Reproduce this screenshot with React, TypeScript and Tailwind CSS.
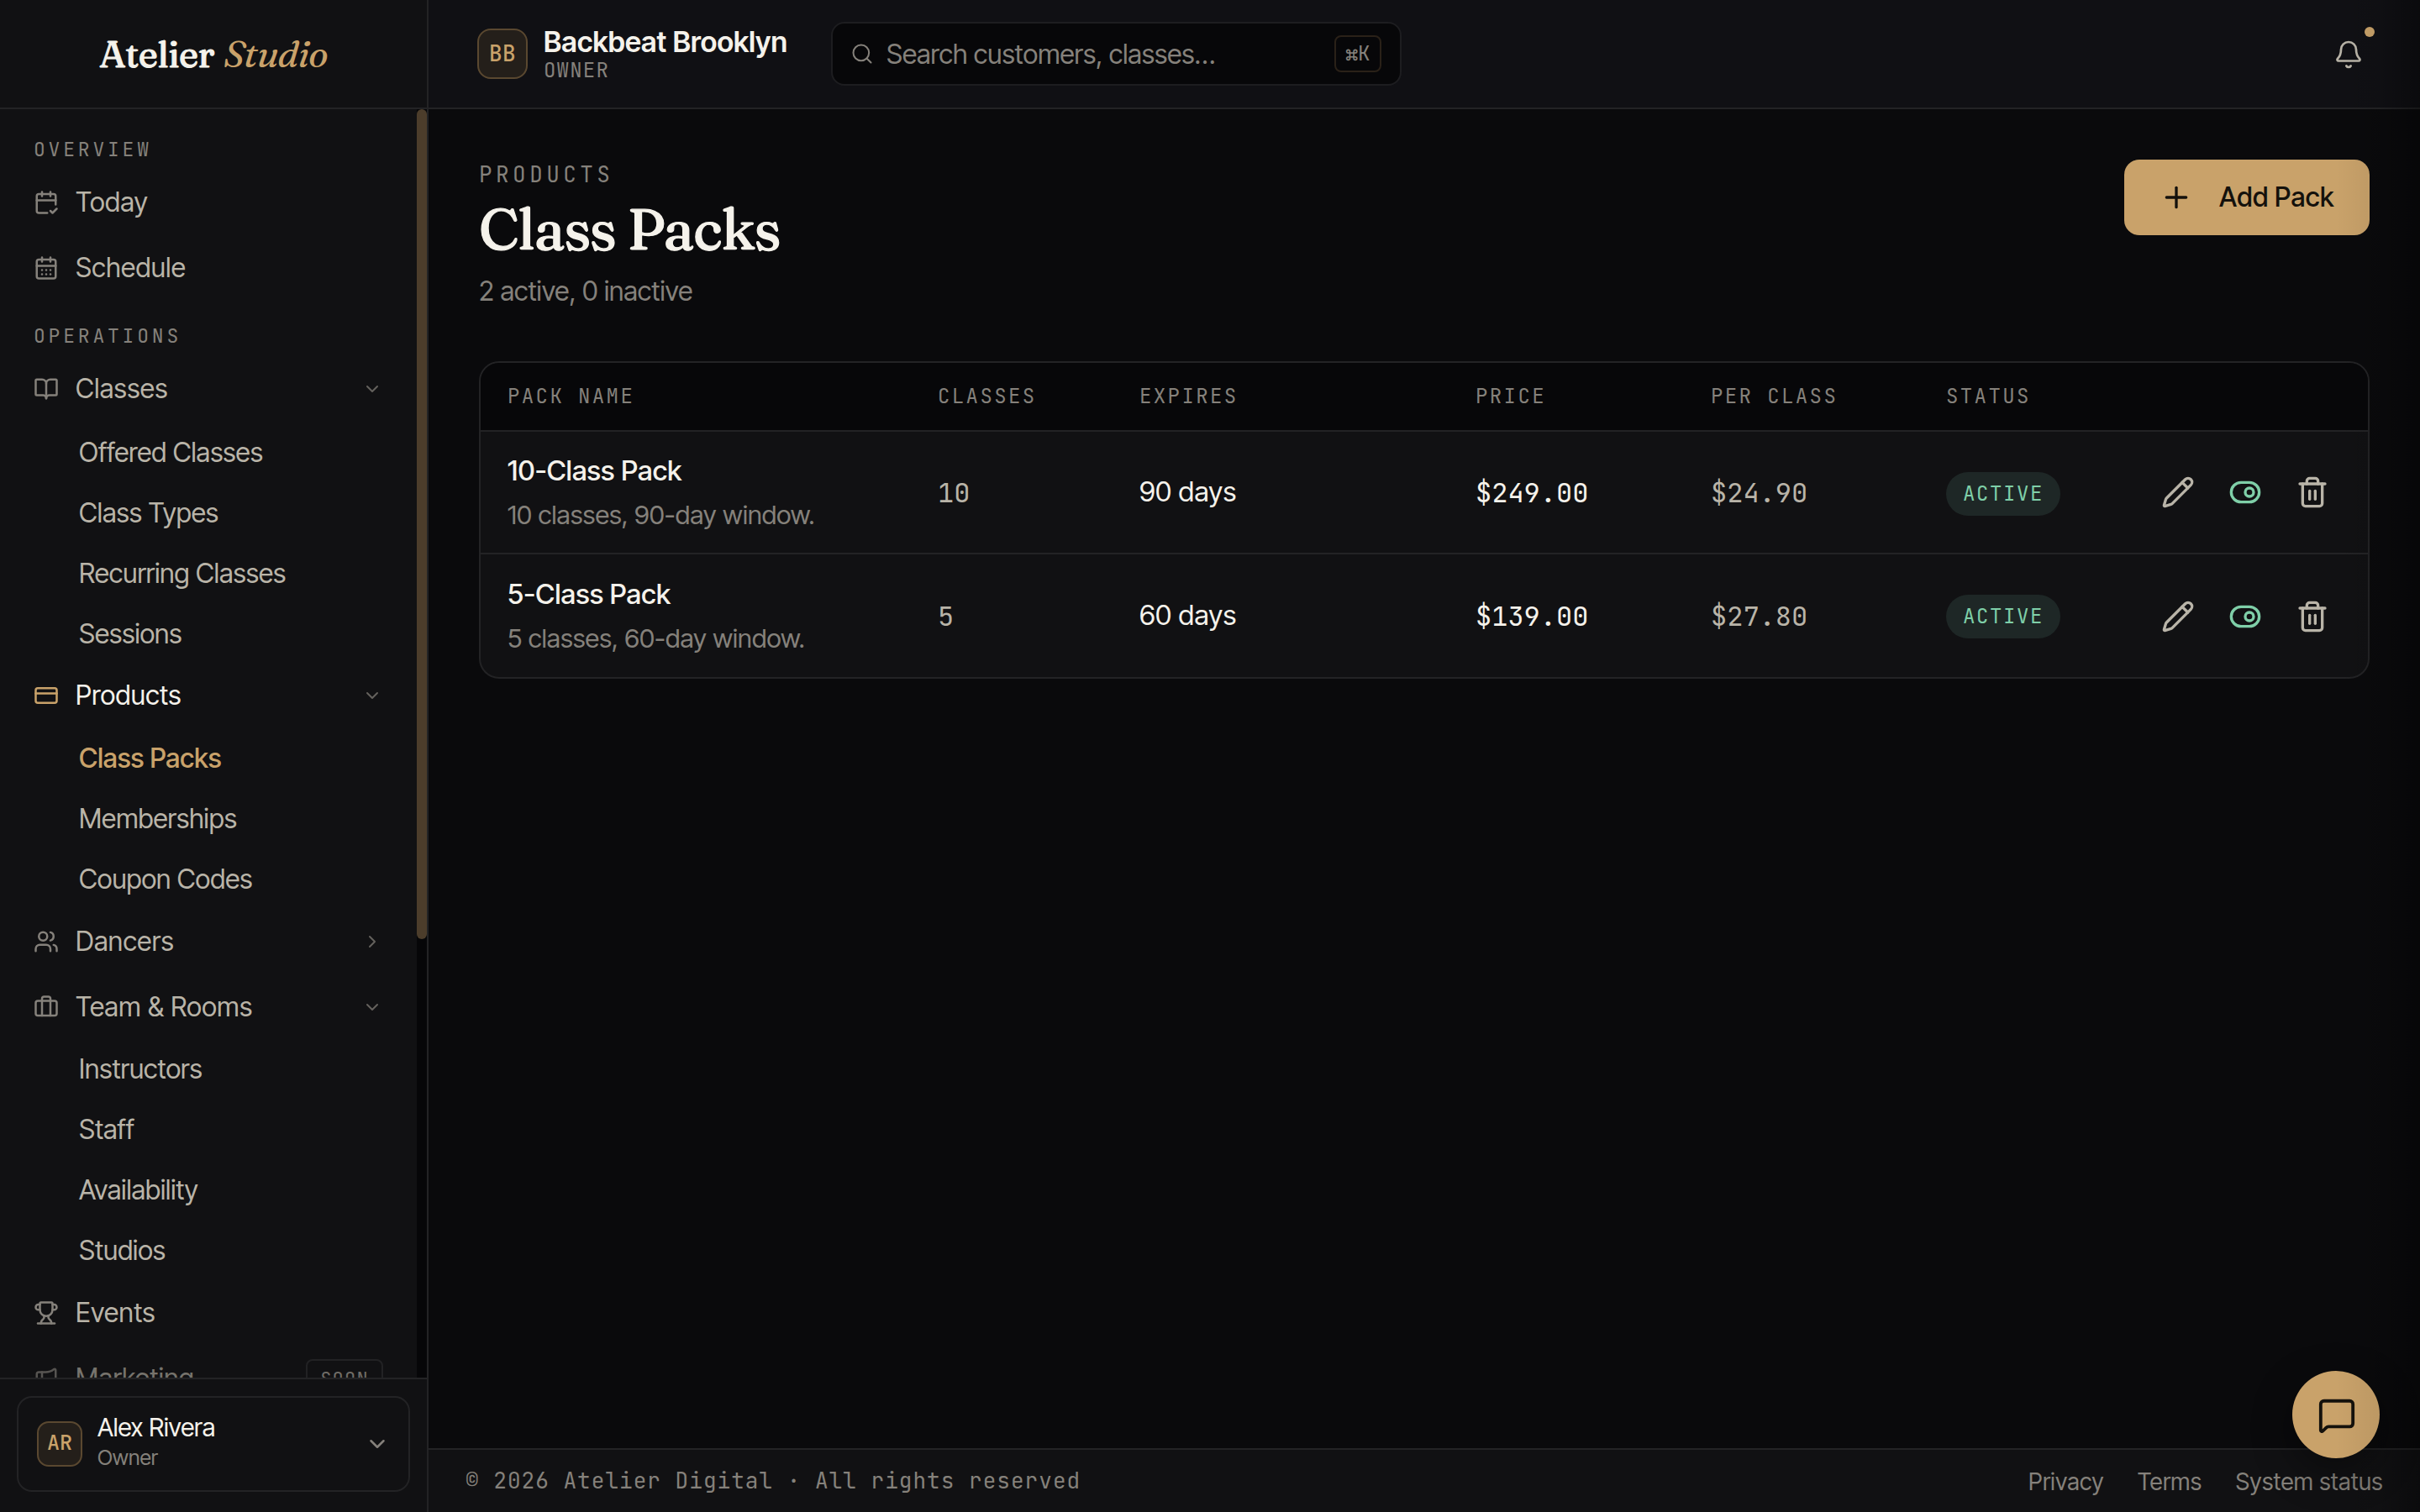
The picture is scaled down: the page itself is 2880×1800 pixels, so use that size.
import React from "react";
import {
  Bell,
  BookOpen,
  Briefcase,
  CalendarCheck2,
  CalendarDays,
  ChevronDown,
  ChevronRight,
  CreditCard,
  Megaphone,
  MessageSquare,
  Pencil,
  Plus,
  Search,
  ToggleRight,
  Trash2,
  Trophy,
  Users,
  type LucideIcon,
} from "lucide-react";

const SANS = "font-['Inter_Tight','Inter',sans-serif]";
const SERIF = "font-['Fraunces','Liberation_Serif',serif]";
const MONO = "font-['JetBrains_Mono','Liberation_Mono',monospace]";

function SectionLabel({ children, className }: { children: string; className: string }) {
  return (
    <div className={`${MONO} ${className} px-10 text-[23px] leading-8 tracking-[3.8px] text-[#85817b]`}>
      {children}
    </div>
  );
}

function NavItem({
  icon: Icon,
  label,
  chevron,
  active,
  soon,
}: {
  icon: LucideIcon;
  label: string;
  chevron?: "down" | "right";
  active?: boolean;
  soon?: boolean;
}) {
  const Chevron = chevron === "right" ? ChevronRight : ChevronDown;
  return (
    <a className={`flex h-[78px] items-center px-10 ${soon ? "opacity-60" : ""}`}>
      <Icon size={30} strokeWidth={2} className={active ? "text-[#c9a26a]" : "text-[#85817b]"} />
      <span
        className={`ml-5 flex-1 text-[32px] leading-10 tracking-[0.38px] ${active ? "text-[#f5f2eb]" : "text-[#b9b4a8]"}`}
      >
        {label}
      </span>
      {chevron && <Chevron size={24} strokeWidth={2} className="mr-px text-[#64615d]" />}
      {soon && (
        <span
          className={`${MONO} flex h-[46px] w-[92px] items-center justify-center rounded-lg border-2 border-[#2e2e30] text-[22px] tracking-[1.2px] text-[#b0aba0]`}
        >
          SOON
        </span>
      )}
    </a>
  );
}

function SubNav({ items, current, className }: { items: string[]; current?: string; className: string }) {
  return (
    <div className={className}>
      {items.map((item) => (
        <a
          key={item}
          className={`flex h-[72px] items-center pl-[94px] text-[32px] ${
            item === current ? "font-medium text-[#c9a26a]" : "text-[#b9b4a8]"
          }`}
        >
          {item}
        </a>
      ))}
    </div>
  );
}

function Sidebar() {
  return (
    <aside className="flex h-full w-[510px] shrink-0 flex-col border-r-2 border-[#232325] bg-[#111113]">
      <div
        className={`${SERIF} flex h-[130px] shrink-0 items-center justify-center border-b-2 border-[#232325] text-[44px]`}
      >
        <span className="font-medium tracking-[-0.55px] text-[#f5f2eb] [-webkit-text-stroke:1px_#f5f2eb]">
          Atelier
        </span>
        <span className="ml-[11px] tracking-[-0.9px] text-[#c9a26a] italic">Studio</span>
      </div>

      <div className="flex min-h-0 flex-1">
        <nav className="min-w-0 flex-1 overflow-hidden">
          <SectionLabel className="pt-8">OVERVIEW</SectionLabel>
          <div className="mt-2">
            <NavItem icon={CalendarCheck2} label="Today" />
            <NavItem icon={CalendarDays} label="Schedule" />
          </div>
          <SectionLabel className="pt-[26px]">OPERATIONS</SectionLabel>
          <div className="mt-2">
            <NavItem icon={BookOpen} label="Classes" chevron="down" />
            <SubNav
              className="mt-px -mb-0.5"
              items={["Offered Classes", "Class Types", "Recurring Classes", "Sessions"]}
            />
            <NavItem icon={CreditCard} label="Products" chevron="down" active />
            <SubNav
              className="-mb-px"
              items={["Class Packs", "Memberships", "Coupon Codes"]}
              current="Class Packs"
            />
            <NavItem icon={Users} label="Dancers" chevron="right" />
            <NavItem icon={Briefcase} label="Team & Rooms" chevron="down" />
            <SubNav className="-mt-px -mb-px" items={["Instructors", "Staff", "Availability", "Studios"]} />
            <NavItem icon={Trophy} label="Events" />
            <NavItem icon={Megaphone} label="Marketing" soon />
          </div>
        </nav>
        <div className="w-3 bg-[#060608]">
          <div className="h-[988px] rounded-full bg-[#4c3d2b]" />
        </div>
      </div>

      <div className="h-40 shrink-0 border-t-2 border-[#232325] px-5 pt-5">
        <div className="flex h-[114px] items-center rounded-[18px] border-2 border-[#232325] px-[22px]">
          <div
            className={`${MONO} flex size-[54px] items-center justify-center rounded-[14px] border-2 border-[#5a4830] bg-[#241f1a] pb-0.5 text-[25px] font-medium text-[#c9a26a]`}
          >
            AR
          </div>
          <div className="ml-[18px] flex-1">
            <div className="text-[30px] leading-8 tracking-[-0.1px] text-[#f5f2eb]">Alex Rivera</div>
            <div className="text-[25px] leading-10 text-[#85817b]">Owner</div>
          </div>
          <ChevronDown size={30} strokeWidth={2} className="text-[#85817b]" />
        </div>
      </div>
    </aside>
  );
}

function Header() {
  return (
    <header className="flex h-[130px] shrink-0 items-center border-b-2 border-[#232325] bg-[#101014] pr-[67px] pl-[58px]">
      <div
        className={`${MONO} flex size-[60px] items-center justify-center rounded-2xl border-2 border-[#5a4830] bg-[#241f1a] pb-0.5 text-[26px] font-medium tracking-[0.5px] text-[#c9a26a]`}
      >
        BB
      </div>
      <div className="ml-[19px] w-[342px]">
        <div className="text-[34px] leading-[39px] font-semibold tracking-[0.22px] text-[#f5f2eb]">
          Backbeat Brooklyn
        </div>
        <div className={`${MONO} text-2xl leading-[29px] tracking-[0.05em] text-[#85817b]`}>OWNER</div>
      </div>
      <div className="flex h-[76px] w-[679px] items-center rounded-2xl border-2 border-[#1d1d20] bg-[#070709] pr-[22px] pl-[21px]">
        <Search size={28} strokeWidth={1.75} className="text-[#85817b]" />
        <span className="ml-[15px] flex-1 pt-0.5 text-[32px] text-[#85817b]">Search customers, classes…</span>
        <kbd
          className={`${MONO} flex h-11 w-14 items-center justify-center rounded-lg border-2 border-[#2a2118] text-2xl text-[#85817b]`}
        >
          ⌘K
        </kbd>
      </div>
      <div className="relative mt-0.5 ml-auto">
        <Bell size={36} strokeWidth={1.8} className="text-[#b9b4a8]" />
        <span className="absolute -top-[15px] -right-[13px] size-3 rounded-full bg-[#c9a26a]" />
      </div>
    </header>
  );
}

const COLS = "grid grid-cols-[512px_240px_400px_280px_280px_256px_1fr] pl-8";

const PACKS = [
  {
    name: "10-Class Pack",
    note: "10 classes, 90-day window.",
    classes: "10",
    expires: "90 days",
    price: "$249.00",
    per: "$24.90",
  },
  {
    name: "5-Class Pack",
    note: "5 classes, 60-day window.",
    classes: "5",
    expires: "60 days",
    price: "$139.00",
    per: "$27.80",
  },
];

function PackTable() {
  return (
    <div className="mt-[61px] overflow-hidden rounded-3xl border-2 border-[#232325] bg-[#111113]">
      <div
        className={`${MONO} ${COLS} h-[82px] items-center border-b-2 border-[#232325] bg-[#070709] text-2xl tracking-widest text-[#85817b]`}
      >
        {["PACK NAME", "CLASSES", "EXPIRES", "PRICE", "PER CLASS", "STATUS"].map((h) => (
          <div key={h}>{h}</div>
        ))}
      </div>
      {PACKS.map((p, i) => (
        <div
          key={p.name}
          className={`${COLS} h-[146px] items-center ${i === 0 ? "border-b-2 border-[#232325]" : ""}`}
        >
          <div>
            <div className="text-[33px] leading-[53px] font-medium tracking-[0.24px] text-[#f5f2eb]">
              {p.name}
            </div>
            <div className="text-[31px] leading-[52px] tracking-[0.1px] text-[#85817b]">{p.note}</div>
          </div>
          <div className={`${MONO} pt-px text-[32px] text-[#b9b4a8]`}>{p.classes}</div>
          <div className="text-[33px] tracking-[0.35px] text-[#f5f2eb]">{p.expires}</div>
          <div className={`${MONO} pt-px text-[32px] text-[#f5f2eb]`}>{p.price}</div>
          <div className={`${MONO} pt-px text-[32px] text-[#b9b4a8]`}>{p.per}</div>
          <div className={i === 0 ? "pt-1" : "pt-0.5"}>
            <span
              className={`${MONO} flex h-[52px] w-[136px] items-center justify-center rounded-full bg-[#1e2726] text-2xl tracking-[1.6px] text-[#7fcfa8]`}
            >
              ACTIVE
            </span>
          </div>
          <div className={`flex gap-10 text-[#b9b4a8] ${i === 0 ? "" : "pt-0.5"}`}>
            <Pencil size={40} />
            <ToggleRight size={40} className="text-[#7fcfa8]" />
            <Trash2 size={40} />
          </div>
        </div>
      ))}
    </div>
  );
}

export default function App() {
  return (
    <div
      className={`${SANS} relative flex h-[1800px] w-[2880px] overflow-hidden bg-[#0a0a0c] whitespace-nowrap`}
    >
      <Sidebar />
      <div className="flex min-w-0 flex-1 flex-col">
        <Header />
        <main className="flex-1 px-[60px] pt-[60px]">
          <div className="flex items-start justify-between">
            <div>
              <div className={`${MONO} text-[26px] leading-9 tracking-[4.45px] text-[#85817b]`}>PRODUCTS</div>
              <h1
                className={`${SERIF} text-[68px] leading-[92px] font-medium tracking-[-1.36px] text-[#f5f2eb] [-webkit-text-stroke:1.2px_#f5f2eb]`}
              >
                Class Packs
              </h1>
              <p className="mt-[7px] text-[32px] leading-11 text-[#85817b]">2 active, 0 inactive</p>
            </div>
            <button className="flex h-[90px] w-[292px] items-center rounded-[18px] bg-[#c9a26a] pl-[42px] text-[32px] font-medium tracking-[0.38px] text-[#14110c]">
              <Plus size={40} />
              <span className="ml-[31px]">Add Pack</span>
            </button>
          </div>
          <PackTable />
        </main>
        <footer className="flex h-[76px] shrink-0 items-center justify-between border-t-2 border-[#232325] bg-[#111113] px-11 text-[#85817b]">
          <span className={`${MONO} pb-px text-[26px] tracking-[0.04em]`}>
            © 2026 Atelier Digital · All rights reserved
          </span>
          <div className="flex gap-10 pt-px text-[28px] tracking-[0.34px]">
            <a>Privacy</a>
            <a>Terms</a>
            <a>System status</a>
          </div>
        </footer>
      </div>
      <button className="absolute right-12 bottom-16 flex size-[104px] items-center justify-center rounded-full bg-[#c9a26a] pt-px pl-px text-[#14110c] shadow-[0_16px_48px_rgba(0,0,0,0.4)]">
        <MessageSquare size={46} />
      </button>
      <div className="pointer-events-none absolute inset-y-0 right-0 w-[100px] bg-linear-to-l from-black/35 via-black/6 to-transparent" />
    </div>
  );
}
